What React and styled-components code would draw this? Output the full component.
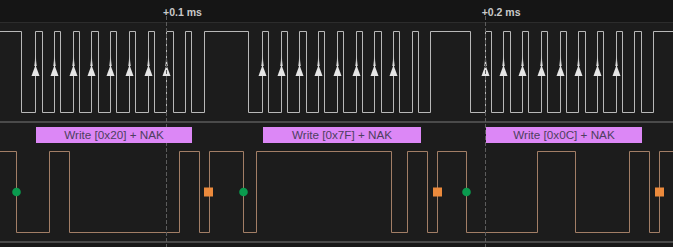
import React from 'react';
import styled, { createGlobalStyle } from 'styled-components';

const Global = createGlobalStyle`
  html, body { margin: 0; padding: 0; background: #1c1c1c; }
  body { font-family: "Liberation Sans", Arial, sans-serif; }
`;

const WIDTH = 673;
const SCL_COLOR = '#b8b8b8';
const SDA_COLOR = '#a27e66';

// start of each SCL burst (first rising edge), 9 clocks each
const bursts = [35.3, 262, 484.7];
const PERIOD = 18.7;
const HIGH = 6.3;

const sdaEdges = [16, 48.7, 69.3, 178.7, 198.7, 208.7, 243.3, 256, 390.7, 407.3, 427.3, 437.3, 466, 536.7, 575.3, 628.7, 648.7, 659.3];
const starts = [16, 243.3, 466];
const stops = [208.3, 436.8, 659];
const frames = [
  { x: 36, w: 156, text: 'Write [0x20] + NAK' },
  { x: 263, w: 158, text: 'Write [0x7F] + NAK' },
  { x: 486, w: 156, text: 'Write [0x0C] + NAK' },
];
const cursors = [{ x: 166, label: '+0.1 ms' }, { x: 484.7, label: '+0.2 ms' }];

const px = (v) => Math.round(v) + 0.5;

function sclEdges() {
  const out = [];
  bursts.forEach((r) => {
    out.push(r - 14.3);
    for (let i = 0; i < 9; i++) {
      out.push(r + i * PERIOD);
      out.push(r + i * PERIOD + HIGH);
    }
    out.push(r + 9 * PERIOD);
  });
  return out;
}

// build a square wave path that starts high and toggles on every edge
function wavePath(edges, hi, lo) {
  let y = hi;
  let d = `M0 ${y}`;
  edges.forEach((e) => {
    const x = px(e);
    const ny = y === hi ? lo : hi;
    d += ` H${x} V${ny}`;
    y = ny;
  });
  d += ` H${WIDTH}`;
  return d;
}

const Viewer = styled.div`
  position: relative;
  width: ${WIDTH}px;
  height: 247px;
  display: flex;
  flex-direction: column;
  background: #1c1c1c;
  overflow: hidden;
`;

const Ruler = styled.div`
  position: relative;
  height: 22px;
  flex: none;
  background: #151515;
  border-bottom: 1px solid #2c2c2c;
`;

const TimeLabel = styled.span`
  position: absolute;
  top: 6px;
  left: ${(p) => p.$x - 3}px;
  font-size: 10.5px;
  font-weight: bold;
  line-height: 13px;
  color: #c9c9c9;
  white-space: nowrap;
`;

const Channel = styled.div`
  position: relative;
  height: ${(p) => p.$h}px;
  flex: none;
  svg { display: block; }
`;

const Divider = styled.div`
  height: 2px;
  flex: none;
  background: #4a4a4a;
`;

const Footer = styled.div`
  flex: 1;
  background: #181818;
`;

const Frame = styled.div`
  position: absolute;
  z-index: 2;
  top: 4px;
  left: ${(p) => p.$x}px;
  width: ${(p) => p.$w}px;
  height: 16px;
  background: #dc87f6;
  color: #4d3f60;
  font-size: 11.7px;
  line-height: 16px;
  text-align: center;
  white-space: nowrap;
`;

const Overlay = styled.svg`
  position: absolute;
  z-index: 1;
  left: 0;
  top: 0;
  pointer-events: none;
`;

function Arrow({ x }) {
  const cx = px(x);
  return (
    <g>
      <polygon points={`${cx - 1.3},43 ${cx + 1.3},43 ${cx},31`} fill="url(#glow)" />
      <polygon points={`${cx},42 ${cx - 4},53 ${cx + 4},53`} fill="#e6e6e6" />
    </g>
  );
}

export default function App() {
  const arrows = [];
  bursts.forEach((r) => {
    for (let i = 0; i < 8; i++) arrows.push(r + i * PERIOD);
  });

  return (
    <>
      <Global />
      <Viewer>
        <Ruler>
          {cursors.map((c) => (
            <TimeLabel key={c.label} $x={c.x}>{c.label}</TimeLabel>
          ))}
        </Ruler>
        <Channel $h={98}>
          <svg width={WIDTH} height={98}>
            <defs>
              <linearGradient id="glow" x1="0" y1="1" x2="0" y2="0">
                <stop offset="0" stopColor="#e6e6e6" stopOpacity="0.9" />
                <stop offset="1" stopColor="#e6e6e6" stopOpacity="0" />
              </linearGradient>
            </defs>
            <path d={wavePath(sclEdges(), 8.5, 89.5)} fill="none" stroke={SCL_COLOR} strokeWidth="1" />
            {arrows.map((x, i) => (
              <Arrow key={i} x={x} />
            ))}
          </svg>
        </Channel>
        <Divider />
        <Channel $h={118}>
          <svg width={WIDTH} height={118}>
            <path d={wavePath(sdaEdges, 28.5, 109.5)} fill="none" stroke={SDA_COLOR} strokeWidth="1" />
            {starts.map((x) => (
              <circle key={x} cx={px(x)} cy={69} r={4.3} fill="#0a9a4e" />
            ))}
            {stops.map((x) => (
              <rect key={x} x={px(x) - 4.5} y={64.5} width={9} height={9} fill="#ec8a3c" />
            ))}
          </svg>
          {frames.map((f) => (
            <Frame key={f.text} $x={f.x} $w={f.w}>{f.text}</Frame>
          ))}
        </Channel>
        <Divider />
        <Footer />
        <Overlay width={WIDTH} height={247}>
          {cursors.map((c) => (
            <line
              key={c.x}
              x1={px(c.x)}
              x2={px(c.x)}
              y1={16}
              y2={247}
              stroke="#5c5c5c"
              strokeWidth="1"
              strokeDasharray="4 2"
            />
          ))}
        </Overlay>
      </Viewer>
    </>
  );
}
